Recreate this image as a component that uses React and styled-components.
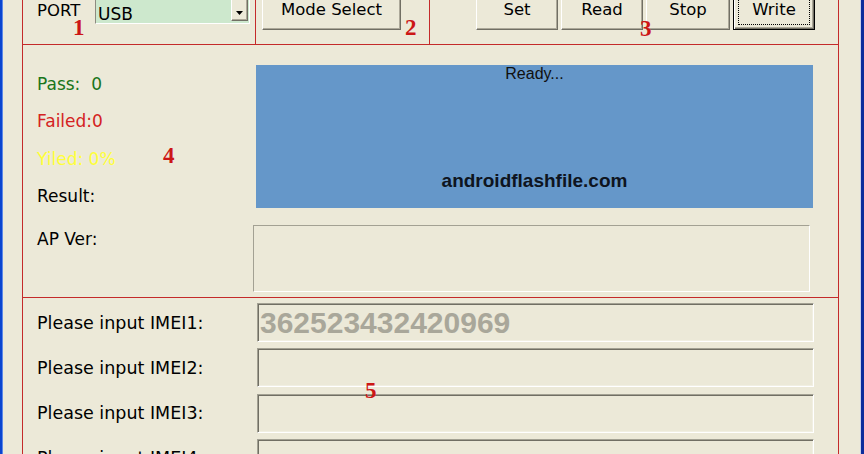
import React from 'react';
import styled, { createGlobalStyle } from 'styled-components';

const GlobalStyle = createGlobalStyle`
  html, body { margin: 0; padding: 0; background: #ece9d8; overflow: hidden; }
  #root { width: 864px; height: 454px; }
`;

const RED = '#c42a2a';

const Window = styled.div`
  display: flex;
  width: 864px;
  height: 454px;
  background: #ece9d8;
  overflow: hidden;
  font-family: "DejaVu Sans", Verdana, sans-serif;
  color: #000;
`;

const EdgeLeft = styled.div`
  flex: none;
  width: 3px;
  background: linear-gradient(to right, #0b45cf 0, #0b45cf 2px, #5c88e8 2px);
`;

const EdgeRight = styled.div`
  flex: none;
  width: 4px;
  background: linear-gradient(to right, #c8d0ea 0, #c8d0ea 1px, #0b2c9c 1px);
`;

const Client = styled.div`
  flex: 1;
  padding: 0 21px 0 19px;
  min-width: 0;
`;

const Frame = styled.div`
  height: 100%;
  border-left: 1px solid ${RED};
  border-right: 1px solid ${RED};
`;

const TopBar = styled.div`
  position: relative;
  display: flex;
  height: 44px;
  border-bottom: 1px solid ${RED};
`;

const TopCell = styled.div`
  display: flex;
  align-items: flex-start;
  box-sizing: border-box;
  flex: ${p => (p.$width ? 'none' : '1')};
  width: ${p => (p.$width ? `${p.$width}px` : 'auto')};
  padding-left: ${p => p.$padLeft || 0}px;
  padding-right: ${p => p.$padRight || 0}px;
  justify-content: ${p => p.$justify || 'flex-start'};
  gap: ${p => p.$gap || 0}px;
  border-right: ${p => (p.$divider ? `1px solid ${RED}` : 'none')};
`;

const PortLabel = styled.span`
  font-size: 16.5px;
  line-height: 16px;
  margin-top: 3px;
`;

const Combo = styled.div`
  display: flex;
  width: 155px;
  height: 28px;
  margin-top: -4px;
  box-sizing: border-box;
  border-style: solid;
  border-width: 1px;
  border-color: #8d8b80 #fff #fff #8d8b80;
  background: #cde8cd;
`;

const ComboText = styled.span`
  flex: 1;
  font-size: 17px;
  line-height: 20px;
  padding: 7px 0 0 2px;
`;

const DropButton = styled.div`
  display: flex;
  align-items: center;
  justify-content: center;
  width: 17px;
  margin: 0 1px 2px 0;
  box-sizing: border-box;
  background: #ece9d8;
  border-style: solid;
  border-width: 1px;
  border-color: #fff #716f64 #716f64 #fff;
  box-shadow: inset -1px -1px 0 #aca899;
  padding-top: 8px;
`;

const Button = styled.div`
  position: relative;
  display: flex;
  align-items: center;
  justify-content: center;
  width: ${p => p.$w}px;
  height: 41px;
  margin-top: -11px;
  box-sizing: border-box;
  background: #ece9d8;
  font-size: 16.5px;
  border-style: solid;
  border-width: 1px;
  border-color: ${p => (p.$focused ? '#000' : '#fff #716f64 #716f64 #fff')};
  box-shadow: ${p =>
    p.$focused
      ? 'inset 1px 1px 0 #fff, inset -1px -1px 0 #716f64, inset -2px -2px 0 #aca899'
      : 'inset -1px -1px 0 #aca899'};
`;

const FocusRing = styled.span`
  position: absolute;
  inset: 4px;
  border: 1px dotted #000;
  pointer-events: none;
`;

const Marker = styled.span`
  position: absolute;
  left: ${p => p.$x}px;
  top: ${p => p.$y}px;
  font-family: "Liberation Serif", "Times New Roman", serif;
  font-weight: bold;
  font-size: 23px;
  line-height: 0.8;
  color: #cc1616;
`;

const StatusSection = styled.div`
  position: relative;
  display: flex;
  height: 252px;
  border-bottom: 1px solid ${RED};
`;

const LabelColumn = styled.div`
  flex: none;
  width: 230px;
  box-sizing: border-box;
  padding: 29px 0 0 14px;
  display: flex;
  flex-direction: column;
  gap: 17.3px;
`;

const Label = styled.div`
  font-size: 17px;
  line-height: 20px;
  height: 20px;
  white-space: pre;
  color: ${p => p.$color || '#000'};
  margin-top: ${p => p.$offset || 0}px;
`;

const DisplayColumn = styled.div`
  display: flex;
  flex-direction: column;
  padding-top: 20px;
`;

const StatusBox = styled.div`
  display: flex;
  flex-direction: column;
  justify-content: space-between;
  align-items: center;
  width: 557px;
  height: 143px;
  margin-left: 3px;
  padding-bottom: 16px;
  box-sizing: border-box;
  background: #6597c9;
  font-family: "Liberation Sans", Arial, sans-serif;
`;

const ReadyText = styled.span`
  font-size: 16px;
  line-height: 18px;
  color: #101010;
`;

const SiteText = styled.span`
  font-size: 19px;
  line-height: 22px;
  font-weight: bold;
  color: #0e1420;
`;

const VersionBox = styled.div`
  width: 557px;
  height: 67px;
  margin-top: 17px;
  box-sizing: border-box;
  border-style: solid;
  border-width: 1px;
  border-color: #a3a193 #fff #fff #a3a193;
`;

const ImeiSection = styled.div`
  position: relative;
  display: flex;
  flex-direction: column;
  gap: 6.3px;
  padding-top: 5px;
`;

const ImeiRow = styled.div`
  display: flex;
  align-items: center;
  height: 39px;
`;

const ImeiLabel = styled.span`
  flex: none;
  width: 234px;
  box-sizing: border-box;
  padding-left: 14px;
  font-size: 17.5px;
  line-height: 20px;
`;

const ImeiField = styled.div`
  display: flex;
  align-items: center;
  width: 557px;
  height: 39px;
  box-sizing: border-box;
  border-style: solid;
  border-width: 1px;
  border-color: #a3a193 #fff #fff #a3a193;
  box-shadow: inset 1px 1px 0 #716f64, inset -1px -1px 0 #f1efe2;
  padding-left: 2px;
  font-family: "Liberation Sans", Arial, sans-serif;
  font-weight: bold;
  font-size: 30px;
  line-height: 1;
  color: #a9a79a;
`;

const topButtons = [
  { label: 'Set', w: 82 },
  { label: 'Read', w: 82 },
  { label: 'Stop', w: 84 },
  { label: 'Write', w: 82, focused: true },
];

const imeis = ['362523432420969', '', '', ''];

export default function App() {
  return (
    <>
      <GlobalStyle />
      <Window>
        <EdgeLeft />
        <Client>
          <Frame>
            <TopBar>
              <TopCell $width={233} $padLeft={14} $padRight={5} $justify="space-between" $divider>
                <PortLabel>PORT</PortLabel>
                <Combo>
                  <ComboText>USB</ComboText>
                  <DropButton>
                    <svg width="7" height="4" viewBox="0 0 7 4">
                      <path d="M0 0h7L3.5 4z" fill="#000" />
                    </svg>
                  </DropButton>
                </Combo>
              </TopCell>
              <TopCell $width={174} $padLeft={6} $divider>
                <Button $w={139}>Mode Select</Button>
              </TopCell>
              <TopCell $padLeft={46} $gap={3}>
                {topButtons.map(b => (
                  <Button key={b.label} $w={b.w} $focused={b.focused}>
                    {b.label}
                    {b.focused && <FocusRing />}
                  </Button>
                ))}
              </TopCell>
              <Marker $x={50} $y={19}>1</Marker>
              <Marker $x={382} $y={19}>2</Marker>
              <Marker $x={617} $y={20}>3</Marker>
            </TopBar>

            <StatusSection>
              <LabelColumn>
                <Label $color="#1a751a">{'Pass:  0'}</Label>
                <Label $color="#d42222">Failed:0</Label>
                <Label $color="#ffff3a">Yiled: 0%</Label>
                <Label>Result:</Label>
                <Label $offset={6}>AP Ver:</Label>
              </LabelColumn>
              <DisplayColumn>
                <StatusBox>
                  <ReadyText>Ready...</ReadyText>
                  <SiteText>androidflashfile.com</SiteText>
                </StatusBox>
                <VersionBox />
              </DisplayColumn>
              <Marker $x={140} $y={102}>4</Marker>
            </StatusSection>

            <ImeiSection>
              {imeis.map((v, i) => (
                <ImeiRow key={i}>
                  <ImeiLabel>Please input IMEI{i + 1}:</ImeiLabel>
                  <ImeiField>{v}</ImeiField>
                </ImeiRow>
              ))}
              <Marker $x={342} $y={84}>5</Marker>
            </ImeiSection>
          </Frame>
        </Client>
        <EdgeRight />
      </Window>
    </>
  );
}
